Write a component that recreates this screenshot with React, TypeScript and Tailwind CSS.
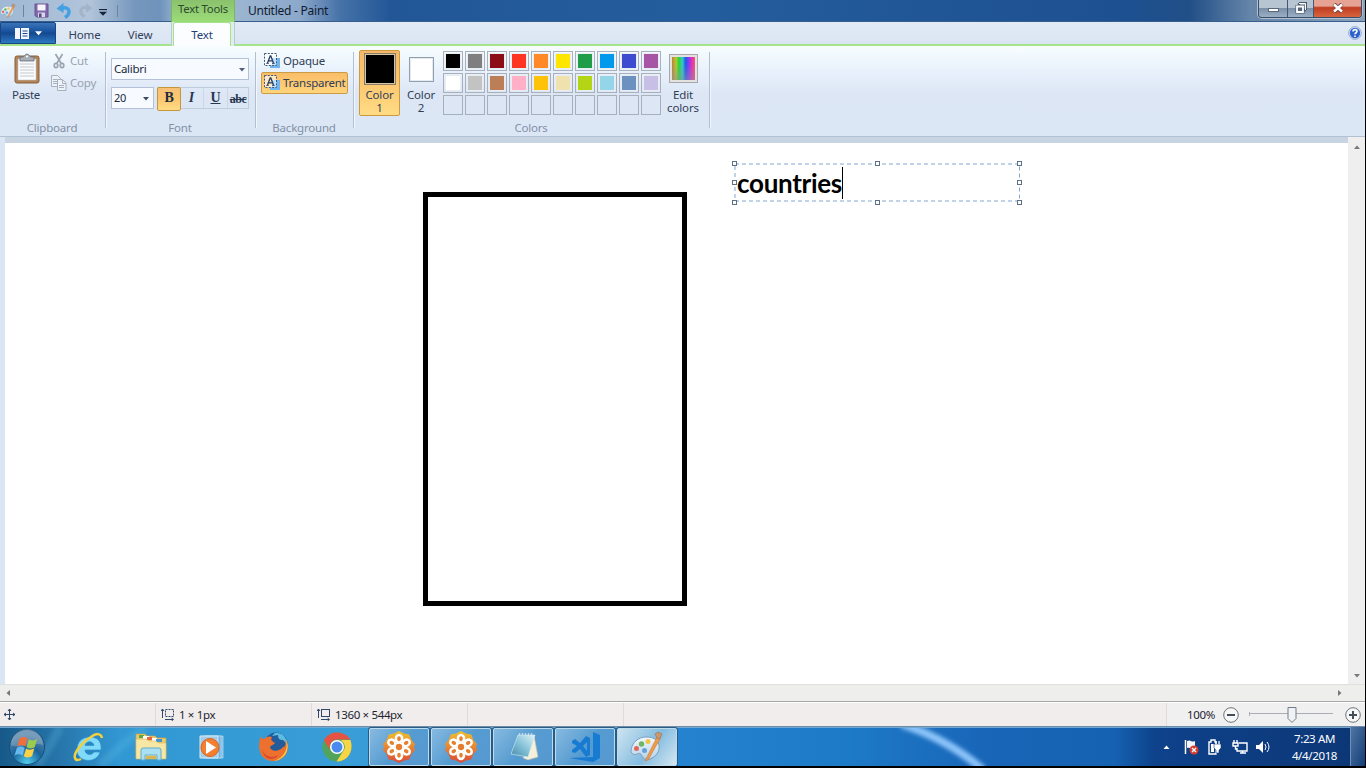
import React from "react";

type IconProps = { className?: string };

const PaintIcon = ({ className = "" }: IconProps) => (
  <svg viewBox="0 0 34 32" className={className}>
    <defs>
      <linearGradient id="pal" x1="0" y1="0" x2="0" y2="1">
        <stop offset="0" stopColor="#f2f8fc" />
        <stop offset="1" stopColor="#b4d3ea" />
      </linearGradient>
    </defs>
    <path d="M16 6C8 6 2 12 1 19c0 5 4 5 6 4s4-1 5 2c1 3 4 4 8 3 6-2 10-8 9-14C28 8 22 6 16 6Z" fill="url(#pal)" stroke="#7d9fbd" strokeWidth="1" />
    <circle cx="6.500" cy="17.500" r="2.500" fill="#e2655a" />
    <circle cx="11.500" cy="13" r="2.700" fill="#6cb567" />
    <circle cx="18" cy="10.500" r="2.500" fill="#f3c34b" />
    <circle cx="14.500" cy="19.500" r="2.500" fill="#64a3da" />
    <path d="M27 6 15 30l3-1L30 8Z" fill="#ee9a4c" stroke="#d07a36" strokeWidth=".6" />
    <path d="m25 3 3-2 4 2-2 5-3-1Z" fill="#c99770" stroke="#a06d4a" strokeWidth=".6" />
  </svg>
);

const SaveIcon = () => (
  <svg viewBox="0 0 15 15" className="size-[15px]">
    <path d="M1 1h13v13H2.500L1 12.500Z" fill="#8068ac" stroke="#68528f" />
    <path d="M3.500 1.500h8v6h-8z" fill="#f7f5fc" />
    <path d="M4 9.500h7V14H4z" fill="#d8d4ea" />
    <path d="M5 10.500h2.500V14H5z" fill="#594477" />
  </svg>
);

const UndoIcon = ({ className = "" }: IconProps) => (
  <svg viewBox="0 0 16 16" className={className}>
    <path d="M5 5.500c5-2 8 0 8 3.500 0 2.500-1.500 4-4 5.500" fill="none" stroke="currentColor" strokeWidth="3.400" />
    <path d="m.5 5.500 7-5.500v10Z" fill="currentColor" />
  </svg>
);

const PasteIcon = () => (
  <svg viewBox="0 0 26 31" className="h-[31px] w-[26px]">
    <rect x="1" y="3" width="24" height="27" rx="2" fill="#b28458" stroke="#87613d" />
    <path d="M4 6h18v21H4z" fill="#fbfcfd" stroke="#c0c6cc" strokeWidth=".6" />
    <path d="M6 11h14M6 14h14M6 17h14M6 20h14M6 23h14" stroke="#c3c8ce" strokeWidth="1" />
    <path d="M6 4h3c1 0 2-3 4-3s3 3 4 3h3v4H6Z" fill="#a7adb5" stroke="#686f78" strokeWidth=".8" />
    <circle cx="13" cy="3.500" r="1" fill="#fff" />
  </svg>
);

const CutIcon = () => (
  <svg viewBox="0 0 12 16" className="h-4 w-3" fill="none" stroke="#9ba5b2" strokeWidth="1.700">
    <path d="m2.500 1 6 10M9.500 1l-6 10" />
    <ellipse cx="3" cy="12.500" rx="1.800" ry="2.200" />
    <ellipse cx="9" cy="12.500" rx="1.800" ry="2.200" />
  </svg>
);

const CopyIcon = () => (
  <svg viewBox="0 0 16 16" className="size-4" fill="#edf1f8" stroke="#a6b0be">
    <path d="M.5.5h6l3 3v8h-9z" />
    <path d="M2 4.500h4M2 6.500h4M2 8.500h4" />
    <path d="M6.500 4.500h5l3.500 3.500v7.500H6.500z" />
    <path d="M11.500 5v3.500H15M8 10.500h5M8 12.500h5" />
  </svg>
);

const TextBgIcon = () => (
  <svg viewBox="0 0 16 16" className="size-4">
    <path d="M8 5h8v10H6v-3h2z" fill="#6fb4f2" />
    <rect x=".5" y=".5" width="12" height="12" fill="#ffffff99" stroke="#3f5877" strokeDasharray="2 1.300" />
    <path d="m3.500 10 2.700-7h.6l2.700 7M4.800 7.800h3.500" fill="none" stroke="#263d61" strokeWidth="1.300" />
    <path d="M2.300 10.400h2.500M8 10.400h2.700" stroke="#263d61" strokeWidth=".9" />
  </svg>
);

const Caret = ({ className = "" }: IconProps) => (
  <svg viewBox="0 0 6 4" className={className} fill="currentColor"><path d="M0 0h6L3 3.500Z" /></svg>
);

const Divider = () => <div className="mt-[6px] h-[76px] w-px shrink-0 bg-[#b3bfd1] shadow-[1px_0_0_#f2f7fd]" />;

function Group({ label, width, children }: { label: string; width: string; children: React.ReactNode }) {
  return (
    <section className={`flex shrink-0 flex-col ${width}`}>
      <div className="flex h-[74px]">{children}</div>
      <div className="text-center leading-[16px] tracking-[-0.2px] text-[#8290a5]"><span className="-ml-px">{label}</span></div>
    </section>
  );
}

const palette = [
  ["#000000", "#7f7f7f", "#8c0d17", "#ff3524", "#ff8827", "#ffe600", "#1f9d49", "#0099eb", "#3d4dd0", "#a656a5"],
  ["#ffffff", "#c3c3c3", "#bb7e56", "#ffb0c7", "#ffc20b", "#efe2af", "#b3d516", "#94d5ea", "#6c91c0", "#c7bfe6"],
  Array(10).fill(""),
];

function TitleBar() {
  return (
    <header className="flex h-[22px] border-b border-[#365f8e] bg-[linear-gradient(90deg,#9fb8d4_0,#b1c4da_90px,#7697bd_135px,#6f93bb_160px,#8ca9ca_172px,#9bb5d1_238px,#8ba8ca_300px,#4672a8_340px,#225797_390px,#245d9d_700px,#1d5090_1130px,#214f87_1190px,#6585a9_1250px,#8ba1b9_1366px)]">
      <div className="flex w-[171px] items-center">
        <PaintIcon className="size-4" />
        <i className="ml-[7px] h-3 w-px bg-[#6b84a1]" />
        <span className="ml-[10px]"><SaveIcon /></span>
        <UndoIcon className="ml-[7px] size-4 text-[#43a0e3]" />
        <UndoIcon className="ml-[6px] size-[15px] -scale-x-100 text-[#a3b4c8]" />
        <svg viewBox="0 0 8 7" className="ml-[6px] mt-[4px] h-[7px] w-2"><path d="M0 .5h8" stroke="#17243a" strokeWidth="1.200" /><path d="M0 2.800h8L4 6.800Z" fill="#17243a" /></svg>
        <i className="ml-[10px] h-3 w-px bg-[#6b84a1]" />
      </div>
      <div className="h-[22px] w-[64px] border-x border-[#79b65d] bg-linear-to-b from-[#8bc16c] to-[#9bdd79] text-center text-[11.300px] leading-[18px] tracking-[-0.2px] text-[#2d4a31]">Text Tools</div>
      <h1 className="ml-[13px] text-[12px] leading-[21px] tracking-[-0.25px] text-[#101b2d]">Untitled - Paint</h1>
      <div className="ml-auto mr-[3px] flex h-[18px] w-[104px] overflow-hidden rounded-b-[4px] border border-t-0 border-[#394e68] shadow-[0_0_0_1px_#b1bfd0]">
        <div className="flex w-[29px] items-end justify-center border-r border-[#425873] bg-[linear-gradient(#b7c4d1_0_45%,#7a8fa6_46%,#9aafc4)] pb-[5px]"><i className="h-[4px] w-[11px] border border-[#59677a] bg-white" /></div>
        <div className="flex w-[26px] items-center justify-center border-r border-[#425873] bg-[linear-gradient(#b7c4d1_0_45%,#7a8fa6_46%,#9aafc4)] pb-[2px]">
          <svg viewBox="0 0 12 12" className="size-3"><path d="M4 1h7v7M4 1v2M11 8H9" fill="none" stroke="#4b596c" strokeWidth="2.400" /><path d="M4 1.500h6.500V8" fill="none" stroke="white" /><path d="M2 4.500h6V10H2z" fill="#52667d" stroke="#4b596c" strokeWidth="3" /><path d="M2 4.500h6V10H2z" fill="#52667d" stroke="white" strokeWidth="1.800" /></svg>
        </div>
        <div className="flex flex-1 items-center justify-center bg-[linear-gradient(#e6a292_0_35%,#bf3d22_45%,#d8643d)] pb-[2px]">
          <svg viewBox="0 0 12 10" className="h-[10px] w-3"><path d="m2 1 8 8m0-8-8 8" stroke="#70403b" strokeWidth="4" /><path d="m2 1.500 8 7m0-7-8 7" stroke="white" strokeWidth="2.600" /></svg>
        </div>
      </div>
    </header>
  );
}

function Tabs() {
  return (
    <nav className="flex h-[24px] border-b-2 border-[#a6e48b] bg-linear-to-b from-[#e1eaf6] to-[#dae5f3] leading-[25px] text-[#34415b]">
      <button className="flex h-[22px] w-[56px] items-center justify-center gap-[6px] rounded-tr-[2px] border border-[#194680] bg-[linear-gradient(#3b74b7,#16509c_45%,#14488f_50%,#2d79c4)] text-white">
        <svg viewBox="0 0 14 11" className="h-[11px] w-[14px]"><path d="M0 0h14v11H0z" fill="#f3f7fd" /><path d="M5.500 0v11" stroke="#1c5299" /><path d="M7.500 3h5M7.500 5.500h5M7.500 8h5" stroke="#1c4d8c" /></svg>
        <Caret className="h-[5px] w-[7px]" />
      </button>
      <div className="w-[57px] text-center">Home</div>
      <div className="w-[54px] text-center">View</div>
      <div className="ml-1 h-[24px] w-[64px] border-x border-[#b8cbd2] bg-[#e0eeeb] pl-px pr-[3px]">
        <div className="h-[24px] rounded-t-[3px] border border-b-0 border-[#a6e18c] bg-[#fbfdff] text-center leading-[23px] text-[#263f79]">Text</div>
      </div>
      <svg viewBox="0 0 14 14" className="ml-auto mr-[3px] mt-[4px] size-[14px]">
        <circle cx="7" cy="7" r="6.300" fill="#e4effc" stroke="#6987b6" strokeWidth=".7" /><circle cx="7" cy="7" r="5.200" fill="#2c62ce" />
        <path d="M5 5.500C5 3 9 3 9 5.300c0 1.500-2 1.400-2 3M7 9.600v1.400" fill="none" stroke="white" strokeWidth="1.600" />
      </svg>
    </nav>
  );
}

function Ribbon() {
  return (
    <div className="flex h-[91px] border-b border-[#b3c1d5] bg-[linear-gradient(#f8fdff_0,#eaf3fc_22px,#dce6f5_48px,#dce7f6)] text-[#303e56]">
      <Group label="Clipboard" width="w-[105px]">
        <div className="w-[51px] pl-[1px] pt-[7px] text-center"><div className="flex justify-center pl-[2px]"><PasteIcon /></div><div className="leading-[22px] tracking-[-0.3px]">Paste</div></div>
        <div className="pt-[4px] text-[#98a2b0]">
          <div className="flex h-[22px] items-center pl-[2px]"><CutIcon /><span className="ml-[5px]">Cut</span></div>
          <div className="flex h-[22px] items-center"><CopyIcon /><span className="ml-[3px] tracking-[-0.2px]">Copy</span></div>
        </div>
      </Group>
      <Divider />
      <Group label="Font" width="w-[149px]">
        <div className="w-full pl-[5px] pr-[6px] pt-[12px] text-[#202b3c]">
          <div className="flex h-[22px] items-center justify-between border border-[#b3c2d8] bg-[#f7faff] pl-[2px] pr-[3px]"><span className="text-[11.500px] tracking-[-0.3px]">Calibri</span><Caret className="mt-px h-[4px] w-[6px] text-[#52607a]" /></div>
          <div className="mt-[7px] flex h-[22px]">
            <div className="flex w-[43px] items-center justify-between border border-[#b3c2d8] bg-[#f7faff] pl-[2px] pr-[4px]"><span className="text-[11px] tracking-[-0.4px]">20</span><Caret className="mt-px h-[4px] w-[6px] text-[#3c4a61]" /></div>
            <div className="ml-[3px] grid flex-1 grid-cols-[22px_24px_24px_1fr] items-stretch border border-[#c0cddd] text-center font-['Liberation_Serif',serif] text-[14px] leading-[19px] text-[#27374f]">
              <b className="-m-px rounded-[2px] border border-[#c69639] bg-[linear-gradient(#f7c176,#fbc76f_50%,#ffdc86)] leading-[20px] text-[#202b3c]">B</b>
              <b className="border-r border-[#ccd7e6] italic">I</b>
              <b className="border-r border-[#ccd7e6] underline underline-offset-1">U</b>
              <b className="text-[12px] leading-[22px] tracking-[-0.5px] line-through">abc</b>
            </div>
          </div>
        </div>
      </Group>
      <Divider />
      <Group label="Background" width="w-[97px]">
        <div className="w-full pl-[5px] pt-[4px]">
          <div className="flex h-[22px] items-center gap-[3px] pl-[3px]"><TextBgIcon /><span className="tracking-[-0.2px]">Opaque</span></div>
          <div className="flex h-[22px] w-[87px] items-center gap-[3px] rounded-[2px] border border-[#cc9c45] bg-linear-to-b from-[#f9bd67] to-[#ffd47c] pl-[2px]"><TextBgIcon /><span className="tracking-[-0.25px]">Transparent</span></div>
        </div>
      </Group>
      <Divider />
      <Group label="Colors" width="w-[355px]">
        <div className="flex w-full pl-[5px] pt-[4px]">
          <div className="flex h-[66px] w-[41px] flex-col items-center rounded-[2px] border border-[#cf9a3d] bg-[linear-gradient(#f5ba69,#fcc771_50%,#ffdc84)] pt-[2px] text-center leading-[13px]">
            <i className="size-[32px] border border-[#8b7c65] bg-black shadow-[inset_0_0_0_1px_#d6c5a5]" /><span className="mt-[3px]">Color<br />1</span>
          </div>
          <div className="flex w-[42px] flex-col items-center pt-[7px] text-center leading-[13px]">
            <i className="size-[25px] border border-[#929faf] bg-white shadow-[inset_0_0_0_1px_#e5eaf1]" /><span className="mt-[6px]">Color<br />2</span>
          </div>
          <div className="ml-px mt-px grid h-[64px] grid-cols-[repeat(10,20px)] grid-rows-[repeat(3,20px)] gap-[2px]">
            {palette.flat().map((color, index) => (
              <div key={index} className="border border-[#a7b0bb] p-px"><div className={color ? "h-full border border-[#e9edf2]" : "h-full"} style={{ backgroundColor: color || "transparent" }} /></div>
            ))}
          </div>
          <div className="ml-[3px] flex w-[38px] flex-col items-center pt-[4px] text-center leading-[13px]">
            <div className="size-[29px] border border-[#a9a6ac] bg-[#e4e2e1] p-[2px]"><div className="h-full bg-[linear-gradient(#ffffff00_0_30%,#8d92a180),linear-gradient(90deg,#b5853c,#b9c630_18%,#20d832_30%,#36cac5_45%,#2453ef_60%,#ae33e4_78%,#f239a4_92%,#e9625a)]" /></div>
            <span className="mt-[5px]">Edit<br />colors</span>
          </div>
        </div>
      </Group>
      <Divider />
    </div>
  );
}

const handles = [
  "left-[-2px] top-[-1px]", "left-[141px] top-[-1px]", "right-[-1px] top-[-1px]",
  "left-[-2px] top-[18px]", "right-[-1px] top-[18px]",
  "left-[-2px] bottom-[-2px]", "left-[141px] bottom-[-2px]", "right-[-1px] bottom-[-2px]",
];

function Workspace() {
  return (
    <main className="flex h-[564px] flex-col bg-[#f0f0f0]">
      <div className="flex flex-1">
        <div className="w-[5px] bg-[#dbe6f4]" />
        <div className="flex flex-1 flex-col bg-[#c9d4e3] pt-[6px]">
          <div className="relative flex-1 bg-white">
            <div className="absolute left-[418px] top-[49px] h-[414px] w-[264px] border-[5px] border-black" />
            <div className="absolute left-[729px] top-[19px] h-[41px] w-[287px]">
              <svg className="absolute inset-0 size-full"><rect x="1" y="2" width="284.500" height="37" fill="none" stroke="#81a7d3" strokeDasharray="4 3" /></svg>
              <div className="absolute left-[3px] top-[4px] flex h-[35px] items-center font-['Lato',sans-serif] text-[26px] font-bold tracking-[-0.3px] text-black">countries</div>
              <i className="absolute left-[108px] top-[5px] h-[32px] w-px bg-black" />
              {handles.map((place) => <i key={place} className={`absolute size-[5px] border border-[#5e7085] bg-white ${place}`} />)}
            </div>
          </div>
        </div>
        <div className="flex w-[17px] flex-col items-center justify-between bg-[#efefef] pb-[6px] pt-[8px] text-[#777]"><Caret className="h-[4px] w-[6px] rotate-180" /><Caret className="h-[4px] w-[6px]" /></div>
      </div>
      <div className="flex h-[17px] items-center justify-between border-t border-[#e0e0e0] bg-[#eeeeed] pl-[5px] pr-[22px] text-[#777]"><Caret className="h-[4px] w-[6px] rotate-90" /><Caret className="h-[4px] w-[6px] -rotate-90" /></div>
    </main>
  );
}

const SizeIcon = ({ dashed = false }: { dashed?: boolean }) => (
  <svg viewBox="0 0 14 13" className="h-[13px] w-[14px]" fill="none" stroke="#30486b"><path d="M1.500 10V1M0 3l1.500-2L3 3M4 11.500h8M10.500 10l2 1.500-2 1.500" /><rect x="4.500" y="1.500" width="8" height="7" strokeDasharray={dashed ? "2 1" : undefined} /></svg>
);

const StatusCell = ({ children }: { children?: React.ReactNode }) => <div className="flex w-[156px] items-center gap-[4px] border-r border-[#dedbdd] pl-[5px]">{children}</div>;

function StatusBar() {
  return (
    <footer className="flex h-[26px] border-y border-t-[#a7a7a7] border-b-[#718aa5] bg-[#f1edec] pt-px tracking-[-0.35px] text-[#1d2430] shadow-[inset_0_1px_0_white]">
      <div className="flex w-[156px] items-center border-r border-[#dedbdd] pl-[4px]"><svg viewBox="0 0 11 11" className="size-[11px]" fill="none" stroke="#2d4669"><path d="M5.500 0v11M0 5.500h11M4 2l1.500-2L7 2M4 9l1.500 2L7 9M2 4 0 5.500 2 7M9 4l2 1.500L9 7" /></svg></div>
      <StatusCell><SizeIcon dashed /><span>1 × 1px</span></StatusCell>
      <StatusCell><SizeIcon /><span>1360 × 544px</span></StatusCell>
      <StatusCell />
      <div className="ml-auto flex w-[199px] items-center border-l border-[#dedbdd] bg-[#f0f0f0] pl-[20px]">
        <span className="w-[30px]">100%</span>
        <svg viewBox="0 0 16 16" className="ml-[6px] size-4" fill="#f7f7f7" stroke="#6d747d"><circle cx="8" cy="8" r="7.300" /><path d="M4 8h8" stroke="#444e5b" strokeWidth="2" /></svg>
        <svg viewBox="0 0 84 16" className="ml-[10px] h-4 w-[84px]"><path d="M.5 5v4M0 6.500h84" stroke="#aaaeb4" /><path d="M39 .5h8v11l-4 4-4-4Z" fill="#f0f3f6" stroke="#727d89" /></svg>
        <svg viewBox="0 0 16 16" className="ml-[12px] size-4" fill="#f7f7f7" stroke="#6d747d"><circle cx="8" cy="8" r="7.300" /><path d="M4 8h8M8 4v8" stroke="#444e5b" strokeWidth="2" /></svg>
      </div>
    </footer>
  );
}

const StartIcon = () => (
  <svg viewBox="0 0 38 38" className="size-[38px]">
    <defs><radialGradient id="orb" cx=".5" cy=".95" r=".8"><stop stopColor="#52cdec" /><stop offset=".55" stopColor="#19639a" /><stop offset="1" stopColor="#5785a9" /></radialGradient></defs>
    <circle cx="19" cy="19" r="17.500" fill="url(#orb)" stroke="#174d78" /><path d="M3 17a16 16 0 0 1 32 0c-9-4-20 5-32 0" fill="#fff3" />
    <path d="M11.500 10.500c3-2 5.500-1.700 8 0l-2.300 8c-2.500-1.500-5-1.700-8 .3Z" fill="#ef6f3c" />
    <path d="M20.800 11.200c3 1.700 5.500 1.500 8.400-.2l-2.400 8c-3 2-5.500 1.800-8.300.2Z" fill="#9cca4c" />
    <path d="M8.800 20c3-2 5.400-1.700 8-.2l-2.300 7.600c-2.500-1.400-5-1.500-8 .3Z" fill="#65b7ec" />
    <path d="M18.100 20.500c3 1.700 5.500 1.500 8.300-.3l-2.300 7.800c-3 2-5.500 1.700-8.300.2Z" fill="#fbcf46" />
  </svg>
);

const IEIcon = () => (
  <svg viewBox="0 0 32 32" className="size-8">
    <path d="M27 21h-6c-2 4-9 3-9-2h16c1-9-4-13-11-13C9 6 4 11 4 19c0 13 20 14 23 2M12 14.500c1-5 8-5 9 0Z" fill="#80dbfb" fillRule="evenodd" stroke="#2b8fcf" strokeWidth=".7" />
    <path d="M29 7c-1-5-6-5-11-1C9 11 0 23 2 27c1 3 4 2 6 1" fill="none" stroke="#f2cf3c" strokeWidth="2.500" />
  </svg>
);

const ExplorerIcon = () => (
  <svg viewBox="0 0 34 32" className="h-8 w-[34px]">
    <path d="M2 3h9l2 2h8l2 2h9v20H2Z" fill="#eccb6c" stroke="#c3a253" strokeWidth=".7" />
    <path d="M5 4h5v3H5Z" fill="#5aa746" /><path d="M9 5h6v3H9Z" fill="#fff" /><path d="M13 6h5v3h-5Z" fill="#e36539" /><path d="M18 7h5v3h-5Z" fill="#fff" /><path d="M22 8h6v3h-6Z" fill="#4295cf" />
    <path d="M2 8h10l3 2h7l2 2h8v16H2Z" fill="#f7e6a4" stroke="#d5b864" strokeWidth=".6" />
    <path d="M7 29V19q0-2 2-2h16q2 0 2 2v10h-4v-5H11v5Z" fill="#abe0f2" stroke="#60accd" />
    <path d="M12 25h10v3H12Z" fill="#d9b756" />
  </svg>
);

const MediaIcon = () => (
  <svg viewBox="0 0 28 28" className="size-7"><path d="M8 3h17v22H8Z" fill="#78b9e6" stroke="#c4e3f7" strokeWidth=".7" /><path d="M5 3h18v22H5Z" fill="#70b5e4" stroke="#bbdcf2" strokeWidth=".7" /><path d="M2 3h18v22H2Z" fill="#a4cce8" stroke="#d4e8f4" /><circle cx="12" cy="14.500" r="9" fill="#f28030" stroke="#dc6121" /><path d="m8 8 10 6.500L8 21Z" fill="white" /></svg>
);

const FirefoxIcon = () => (
  <svg viewBox="0 0 32 32" className="size-8">
    <circle cx="18" cy="13" r="11.500" fill="#245b9b" />
    <path d="M17 2c8-1 12 5 12 11l-4-4c-4 0-5-2-5-5l-6 1Z" fill="#5bbde1" />
    <path d="M3 5c0 2 1 3 3 3 3-3 6-3 8-2-1 2-1 3 0 4l3 2c-1 2-4 2-5 4 1 5 9 5 13 0 3 0 3-5 2-8 8 13-3 23-12 22C3 30-2 18 3 5Z" fill="#ed702e" />
    <path d="M28 8c5 11-2 21-12 22 6-2 9-5 11-9 2-3 2-8 1-13Z" fill="#fbd351" />
    <path d="M4 18c2 8 11 10 16 6-2 5-14 7-16-6" fill="#d84730" />
  </svg>
);

const ChromeIcon = () => (
  <svg viewBox="0 0 30 30" className="size-[30px]"><circle cx="15" cy="15" r="14.500" fill="#50a45b" /><path d="M15 .5c6 0 11 3 13.500 7H15a8 8 0 0 0-7 11L2 8C5 3 10 .5 15 .5Z" fill="#e65344" /><path d="M28.500 8c4 12-4 22-14 21.500L22 18c2-4 0-7-3-10Z" fill="#f8d545" /><circle cx="15" cy="15" r="7" fill="white" /><circle cx="15" cy="15" r="5.500" fill="#4a8aef" /></svg>
);

const FlowerIcon = () => (
  <svg viewBox="0 0 32 32" className="size-8">
    <defs><linearGradient id="flower" gradientUnits="userSpaceOnUse" x1="0" y1="0" x2="0" y2="32"><stop stopColor="#eec12e" /><stop offset=".5" stopColor="#e88630" /><stop offset="1" stopColor="#db4938" /></linearGradient></defs>
    <path d="M16 .5 21 3l5 1 2 5 3.500 4-1 3 1 3-3.500 4-2 5-5 1-5 2.500-5-2.500-5-1-2-5-3.500-4 1-3-1-3L4 9l2-5 5-1Z" fill="url(#flower)" stroke="url(#flower)" strokeLinejoin="round" />
    {[0, 60, 120, 180, 240, 300].map((angle) => <ellipse key={angle} cx="16" cy="7.700" rx="3.100" ry="3.700" fill="#e48231" stroke="white" strokeWidth="2.500" transform={`rotate(${angle} 16 16)`} />)}
    <circle cx="16" cy="16" r="4" fill="#e77b2e" stroke="white" strokeWidth="1.700" />
  </svg>
);

const NotepadIcon = () => (
  <svg viewBox="0 0 32 30" className="h-[30px] w-8"><defs><linearGradient id="glass" x1="1" y1="0" x2="0" y2="1"><stop stopColor="#e1f2f5" /><stop offset=".5" stopColor="#86c4d9" /><stop offset="1" stopColor="#458aa8" /></linearGradient></defs><path d="m27 3 4 22-10 3-5-2Z" fill="#f3f0dd" stroke="#b8bba8" strokeWidth=".7" /><path d="M11 3h17l-7 22-17-3Z" fill="url(#glass)" stroke="#d6edf3" strokeWidth=".6" /><path d="m12 3 1-2m2 2 1-2m2 2 1-2m2 2 1-2m2 2 1-2" stroke="#f1f9fb" strokeWidth=".8" /></svg>
);

const CodeIcon = () => (
  <svg viewBox="0 0 34 32" className="h-8 w-[34px]" fill="#187bd2"><path d="m25 1 7 3v23l-7 4L1 27l24-1Z" /><path d="m4 10 3-2 5 4 6-7 4 2v17l-4 2-6-8-5 4-3-1v-2l5-4-5-3Zm15 1-4 4 4 5Z" fillRule="evenodd" /></svg>
);

const TaskButton = ({ children, active = false }: { children: React.ReactNode; active?: boolean }) => (
  <button className={`flex h-[38px] w-[60px] items-center justify-center rounded-[2px] border border-[#bcdbed] shadow-[0_0_0_1px_#285c87] ${active ? "bg-[linear-gradient(125deg,#cee4f0,#83bce0_55%,#d6e7f2)]" : "bg-[linear-gradient(130deg,#87bae0,#559bd0_52%,#5699d1)]"}`}>{children}</button>
);

function Taskbar() {
  return (
    <div className="relative flex h-[41px] overflow-hidden border-b-2 border-black bg-[linear-gradient(90deg,#175988_0,#2878ae_65px,#3198d3_120px,#399ed7_350px,#2482cf_680px,#1d7ac6_850px,#1966b9_980px,#1562b1_1115px,#0e428b_1155px,#0c3675_1366px)]">
      <svg className="absolute inset-x-0 top-0 h-[39px] w-full" viewBox="0 0 1366 39"><defs><filter id="glow"><feGaussianBlur stdDeviation="2" /></filter></defs><path d="M902-3Q948 12 984 43" stroke="#8dc5fa" strokeWidth="8" fill="none" filter="url(#glow)" /><path d="M60 0Q50 20 37 39M145 0Q125 15 100 39" stroke="#61bce344" strokeWidth="9" fill="none" filter="url(#glow)" /><path d="M0 .5h1366" stroke="#71a9d3" strokeWidth="1" /></svg>
      <div className="relative flex items-center">
        <div className="flex w-[58px] items-center justify-center pr-[5px]"><StartIcon /></div>
        <div className="flex w-[62px] justify-center"><IEIcon /></div>
        <div className="flex w-[62px] justify-center"><ExplorerIcon /></div>
        <div className="flex w-[60px] justify-center"><MediaIcon /></div>
        <div className="flex w-[63px] justify-center"><FirefoxIcon /></div>
        <div className="flex w-[64px] justify-center"><ChromeIcon /></div>
        <div className="flex gap-[2px]"><TaskButton><FlowerIcon /></TaskButton><TaskButton><FlowerIcon /></TaskButton><TaskButton><NotepadIcon /></TaskButton><TaskButton><CodeIcon /></TaskButton><TaskButton active><PaintIcon className="h-8 w-[34px]" /></TaskButton></div>
      </div>
      <div className="relative ml-auto flex items-center text-white">
        <Caret className="mr-[13px] h-[4px] w-[7px] rotate-180" />
        <svg viewBox="0 0 16 16" className="mr-2 size-4"><path d="M2.500 1v14" stroke="white" strokeWidth="1.500" /><path d="M4 2c4-2 4 2 8 0v7c-4 2-4-1-8 0Z" fill="#f3f7fc" /><circle cx="11" cy="11" r="4.500" fill="#d63b32" /><path d="m9 9 4 4m0-4-4 4" stroke="white" strokeWidth="1.300" /></svg>
        <svg viewBox="0 0 16 16" className="mr-[9px] size-4"><path d="M4 3V1h4v2h1v12H2V3Z" fill="none" stroke="white" strokeWidth="1.400" /><path d="M4 5h3v8H4Z" fill="white" /><path d="M7 5h7v4l-2 2v3H9v-3L7 9Z" fill="white" stroke="#0d3c80" strokeWidth=".6" /><path d="M9 5V2M12 5V2" stroke="white" strokeWidth="1.300" /></svg>
        <svg viewBox="0 0 16 16" className="mr-[7px] size-4" fill="none" stroke="white" strokeWidth="1.400"><path d="M7 4h8v8H5V9M8 14h6M10.500 12v2M2 1v3M5 1v3M1 4h5v3H1ZM3.500 7v3H5" /></svg>
        <svg viewBox="0 0 16 16" className="size-4" fill="white"><path d="M1 6h3l4-4v12l-4-4H1Z" /><path d="M10 5q2 3 0 6M12 3q4 5 0 10" fill="none" stroke="white" /></svg>
        <div className="ml-[16px] w-[55px] text-center text-[11.500px] leading-[17px] tracking-[-0.35px]">7:23 AM<br />4/4/2018</div>
        <div className="ml-[8px] h-[39px] w-[15px] border-l border-[#6c91b7] bg-linear-to-br from-[#5075a2] to-[#123e78]" />
      </div>
    </div>
  );
}

export default function App() {
  return (
    <div className="flex h-[768px] w-[1366px] flex-col overflow-hidden border-r border-black bg-black font-['Noto_Sans',sans-serif] text-[11.500px] tracking-[-0.15px]">
      <TitleBar />
      <Tabs />
      <div className="flex flex-col"><Ribbon /><Workspace /></div>
      <StatusBar />
      <Taskbar />
    </div>
  );
}
